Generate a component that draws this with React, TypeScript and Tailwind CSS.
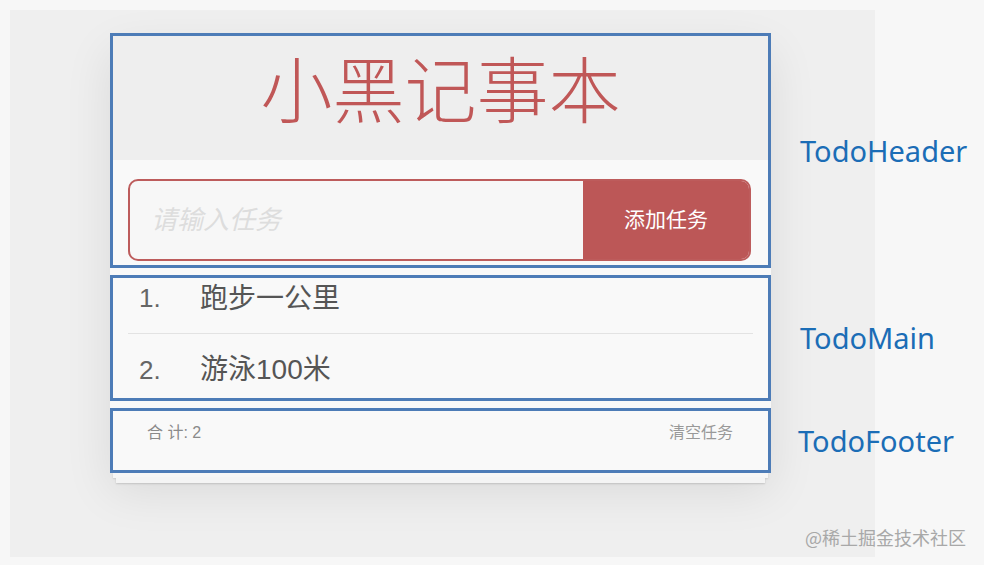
import React from 'react';

const cjk = "font-['Liberation_Sans','Noto_Sans_CJK_SC',sans-serif]";

const todos = [
  { id: 1, name: '跑步一公里' },
  { id: 2, name: '游泳100米' },
];

function TodoHeader() {
  return (
    <div className="h-[235px] border-[3px] border-[#4d7cb7] flex flex-col">
      <div className="h-[124px] bg-[#eeeeee] flex items-center justify-center pb-[12px]">
        <h1 className="text-[72px] leading-none font-light text-[#c05757]">小黑记事本</h1>
      </div>
      <div className="flex-1 pl-[15px] pr-[17px] pt-[19px]">
        <div className="h-[82px] flex border-2 border-[#bd5c5c] rounded-[10px] overflow-hidden bg-[#f7f7f7]">
          <input
            className="flex-1 bg-transparent pl-[21px] text-[26px] italic text-[#444] placeholder:text-[#dddddd] outline-none"
            placeholder="请输入任务"
          />
          <button className="w-[166px] bg-[#bc5757] text-white text-[21px]">添加任务</button>
        </div>
      </div>
    </div>
  );
}

function TodoMain() {
  return (
    <div className="h-[126px] border-[3px] border-[#4d7cb7] px-[15px]">
      <ul>
        {todos.map((t, i) => (
          <li
            key={t.id}
            className={`flex items-center text-[28px] text-[#555] ${i === 0 ? 'h-[56px] pb-[14px] border-b border-[#e3e3e3]' : 'h-[64px] pt-[8px]'}`}
          >
            <span className="w-[72px] pl-[11px] text-[26px] text-[#666]">{i + 1}.</span>
            <span>{t.name}</span>
          </li>
        ))}
      </ul>
    </div>
  );
}

function TodoFooter() {
  return (
    <div className="h-[65px] border-[3px] border-[#4d7cb7] flex justify-between items-start pt-[10px] pl-[34px] pr-[35px] text-[#8a8a8a]">
      <span className="text-[16px]">合 计: {todos.length}</span>
      <span className="text-[16px] text-[#999]">清空任务</span>
    </div>
  );
}

export default function App() {
  return (
    <div className={`relative w-[984px] h-[565px] bg-[#f7f7f7] p-[10px] overflow-hidden ${cjk}`}>
      <div className="w-[865px] h-[547px] bg-[#efefef] pl-[100px] pt-[23px]">
        <div className="flex gap-[29px]">
          {/* card */}
          <div className="w-[661px] shrink-0">
            <div className="bg-[#f9f9f9] flex flex-col gap-[7px] shadow-[0_18px_45px_rgba(0,0,0,0.09)]">
              <TodoHeader />
              <TodoMain />
              <TodoFooter />
            </div>
            <div className="mx-[3px] h-[5px] bg-[#f6f6f6] shadow-[0_1px_2px_rgba(0,0,0,0.12)]" />
            <div className="mx-[6px] h-[5px] bg-[#f4f4f4] shadow-[0_1px_2px_rgba(0,0,0,0.15)]" />
          </div>
          {/* labels */}
          <div className="flex flex-col gap-[7px] font-['Noto_Sans',sans-serif] text-[29px] text-[#1b6db6] whitespace-nowrap">
            <div className="h-[235px] flex items-center">TodoHeader</div>
            <div className="h-[126px] flex items-center">TodoMain</div>
            <div className="h-[65px] flex items-center -ml-[2px]">TodoFooter</div>
          </div>
        </div>
      </div>
      <div className="absolute right-[18px] top-[524px] text-[18px] text-[#a8a8a8] font-['Noto_Sans_CJK_SC',sans-serif]">
        @稀土掘金技术社区
      </div>
    </div>
  );
}
